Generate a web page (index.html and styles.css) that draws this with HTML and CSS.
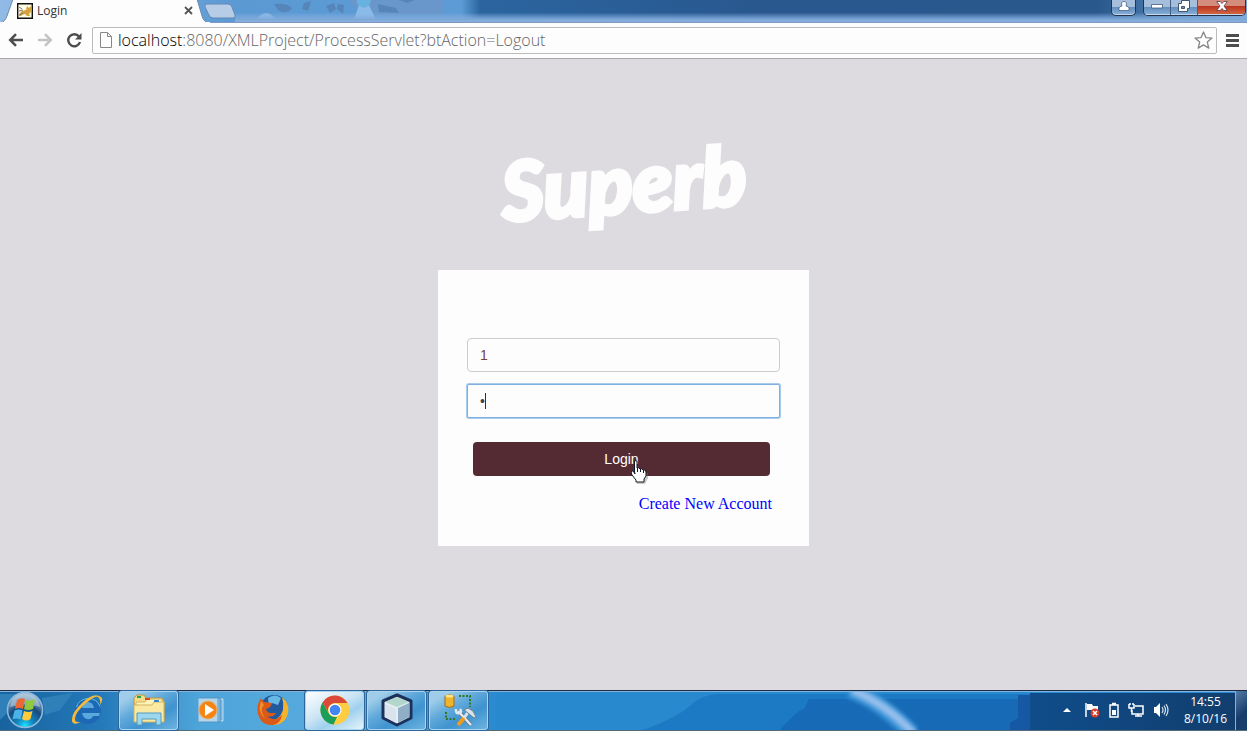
FILE: index.html
```html
<!DOCTYPE html>
<html lang="en">
<head>
<meta charset="utf-8">
<title>Login</title>
<link rel="stylesheet" href="styles.css">
</head>
<body>
<div class="desktop">
  <header class="tabstrip">
    <svg class="backdrop" viewBox="0 0 1247 23" preserveAspectRatio="none" aria-hidden="true">
      <defs>
        <linearGradient id="glass" x1="0" x2="1" y1="0" y2="0"><stop offset="0" stop-color="#91bbe5"/><stop offset=".19" stop-color="#5b99d3"/><stop offset=".37" stop-color="#5c9bd5"/><stop offset=".385" stop-color="#2b659f"/><stop offset=".6" stop-color="#29588f"/><stop offset=".88" stop-color="#29588d"/><stop offset="1" stop-color="#7aa5d5"/></linearGradient>
        <linearGradient id="edge" x1="0" x2="0" y1="0" y2="1"><stop offset=".55" stop-color="#8db4e3" stop-opacity="0"/><stop offset=".85" stop-color="#7da8da"/><stop offset="1" stop-color="#91b1dc"/></linearGradient>
      </defs>
      <path fill="url(#glass)" d="M0 0h1247v23H0z"/>
      <path fill="#6997cb" d="M275 0h75q7 15 25 15h68V0z"/>
      <g fill="#5585b9"><path d="M274 4q16-1 18 5-7 6-14 1zM304 3l7-2-3 10-6-2zM326 6l8-3 2 6-6 4zM338 4l6 1-1 9-6-5zM378 4l18 4 3 5-20-1zM399 0h16l-8 3z"/></g>
      <path fill="#8abbe8" d="M255 22q6-11 15-8l9 8zM353 22l6-17h10l8 17z"/>
      <path fill="#67b2e1" d="M357 0h14l-2 6-6 2-6-4z"/>
      <path fill="url(#edge)" d="M235 0h1012v23H235z"/>
      <path fill="#7c9ac1" d="M0 22h1247v1H0z"/>
    </svg>
    <div class="tab">
      <svg class="tab-shape" viewBox="0 0 210 23" preserveAspectRatio="none" aria-hidden="true"><path fill="#fdfdfd" stroke="#6c8bae" d="M0 23q5-1 7-7L13-1h184l5 17q2 7 8 7"/><path fill="#fdfdfd" d="M0 22h210v1H0z"/></svg>
      <svg class="favicon" width="16" height="16" viewBox="0 0 16 16" aria-hidden="true"><path fill="#fffce5" stroke="#111" stroke-width="1.4" d="M.7.7h14.600v14.600H.7z"/><path fill="#d3a33d" d="M2 11l3-3 4-1 1-4 2 2 2-2v6l-2 2 1 2h-3l-2-2-3 1-1 1H2z"/><path stroke="#777" fill="none" d="M2 4l3 2M2 8l4-1M3 12l3-2"/></svg>
      <span class="tab-title">Login</span>
      <button class="tab-close" aria-label="Close tab"><svg width="9" height="9" viewBox="0 0 9 9"><path stroke="#555" stroke-width="1.8" d="M1 1l7 7M8 1L1 8"/></svg></button>
    </div>
    <button class="new-tab" aria-label="New tab"><svg width="32" height="16" viewBox="0 0 32 16"><path fill="#b6cce7" stroke="#6488b5" d="M3 1h21q3 0 4 3l3 8q1 3-2 3H9q-3 0-4-3L1 4q-1-3 2-3z"/></svg></button>
    <div class="window-controls">
      <button class="control user" aria-label="User"><svg width="12" height="10" viewBox="0 0 12 10"><path fill="#fff" stroke="#31557c" stroke-width=".7" d="M1 9.500V7q0-1.500 3-2Q2.500.5 6 .5T8 5q3 .5 3 2v2.500z"/></svg></button>
      <div class="control-group">
        <button class="control" aria-label="Minimize"><svg width="12" height="6" viewBox="0 0 12 6"><path fill="#fff" stroke="#42597b" stroke-width=".8" d="M.5 1.500h11v3.500H.5z"/></svg></button>
        <button class="control" aria-label="Restore"><svg width="12" height="12" viewBox="0 0 12 12"><path fill="#fff" stroke="#435472" d="M3.500.5h8v8h-2v3h-9v-8h3z"/><path fill="#7992b3" stroke="#435472" d="M3.500 6.500h3v2h-3z"/></svg></button>
        <button class="control close" aria-label="Close"><svg width="12" height="10" viewBox="0 0 12 10"><path fill="#fff" stroke="#593b49" stroke-width=".8" d="M.7.5h3.500L6 2.500 7.800.5h3.500L8 5l3.300 4.500H7.800L6 7.500l-1.800 2H.7L4 5z"/></svg></button>
      </div>
    </div>
  </header>

  <nav class="toolbar" aria-label="Browser toolbar">
    <button class="tool" aria-label="Back"><svg width="16" height="14" viewBox="0 0 16 14"><path fill="none" stroke="#4d4d4d" stroke-width="2.500" d="M15 7H2.500M8 1.200L2.200 7 8 12.800"/></svg></button>
    <button class="tool" aria-label="Forward"><svg width="16" height="14" viewBox="0 0 16 14"><path fill="none" stroke="#c4c4c4" stroke-width="2.500" d="M1 7h12.500M8 1.200L13.800 7 8 12.800"/></svg></button>
    <button class="tool" aria-label="Reload"><svg width="16" height="16" viewBox="0 0 16 16"><path fill="none" stroke="#4d4d4d" stroke-width="2.400" d="M13 4.500A6 6 0 1 0 14 10"/><path fill="#4d4d4d" d="M15.500 1v6.500H9z"/></svg></button>
    <div class="address">
      <svg width="12" height="16" viewBox="0 0 12 16" aria-hidden="true"><path fill="#fff" stroke="#888" d="M.5.5h7l4 4v11H.5zM7.500.5v4h4"/></svg>
      <span class="url"><span class="host">localhost</span>:8080/XMLProject/ProcessServlet?btAction=Logout</span>
      <button class="tool star" aria-label="Bookmark"><svg width="19" height="18" viewBox="0 0 19 18"><path fill="#fff" stroke="#858585" stroke-width="1.300" stroke-linejoin="round" d="M9.500 1l2.400 5.600 6.100.5-4.700 4 1.500 6-5.300-3.200-5.300 3.200 1.500-6-4.700-4 6.100-.5z"/></svg></button>
    </div>
    <button class="tool" aria-label="Menu"><svg width="13" height="13" viewBox="0 0 13 13"><path stroke="#4d4d4d" stroke-width="3" d="M0 1.500h13M0 6.500h13M0 11.500h13"/></svg></button>
  </nav>

  <main class="page">
    <h1 class="logo">Superb</h1>
    <form class="card">
      <input class="field" type="text" value="1" aria-label="Username">
      <div class="password">
        <input class="field focused" type="password" value="1" aria-label="Password">
        <span class="caret"></span>
      </div>
      <div class="submit-row">
        <button class="submit" type="button">Login</button>
        <svg class="pointer" width="20" height="24" viewBox="0 0 20 24" aria-hidden="true"><path fill="#777" opacity=".4" d="M7 4l3 6 8 3v5l-3 6H7z"/><path fill="#fff" stroke="#101826" stroke-linejoin="round" d="M4.500 12V2q0-1.500 1.300-1.500T7 2v6q2-1 3 1 2-1 3 1 3-1 3 2v4l-2 3v3H6v-2l-4-5-1-3q1-2 3 0l1 2z"/><path stroke="#101826" d="M7.500 8v4M10.500 9v3M13.500 10v3"/></svg>
      </div>
      <a class="create" href="#">Create New Account</a>
    </form>
  </main>

  <footer class="taskbar">
    <svg class="backdrop" viewBox="0 0 1247 41" preserveAspectRatio="none" aria-hidden="true">
      <defs>
        <linearGradient id="bar" x1="0" x2="1" y1="0" y2="0"><stop offset="0" stop-color="#17639e"/><stop offset=".08" stop-color="#2479b9"/><stop offset=".16" stop-color="#4ea5d9"/><stop offset=".29" stop-color="#59abdf"/><stop offset=".4" stop-color="#2989cf"/></linearGradient>
        <linearGradient id="tray" x1="0" x2="1" y1="0" y2="0"><stop offset="0" stop-color="#0f4d8b"/><stop offset="1" stop-color="#123d6b"/></linearGradient>
        <filter id="soft"><feGaussianBlur stdDeviation="2"/></filter>
      </defs>
      <path fill="url(#bar)" d="M0 0h1247v41H0z"/>
      <path fill="#2f80b9" d="M0 4h20L8 22 0 30zM42 8l31-5-13 17-15 5z"/>
      <path fill="#1c79c4" d="M640 41q33-11 50-25 11-12 32-12h525v37z"/>
      <path fill="#176ab6" d="M781 41v-3l18-17 5-2 5-10h438v32z"/>
      <path fill="none" stroke="#3b95d8" stroke-width="16" filter="url(#soft)" d="M850 0q32 12 62 44"/>
      <path fill="none" stroke="#97c0ed" stroke-width="8" filter="url(#soft)" d="M852 0q34 14 62 44"/>
      <path fill="#1658a4" d="M1018 5h229v36h-237v-8l8-5z"/>
      <path fill="url(#tray)" d="M1030 3h217v38h-217z"/>
      <path fill="#1a2b45" d="M0 0h1247v1H0z"/><path fill="#83b4df" d="M0 1h1247v1H0z"/><path fill="#536a7b" d="M0 40h1247v1H0z"/>
    </svg>
    <button class="start" aria-label="Start"><svg width="38" height="38" viewBox="0 0 38 38"><defs><radialGradient id="orb" cx=".5" cy=".95" r=".9"><stop offset="0" stop-color="#1de5ff"/><stop offset=".25" stop-color="#108bc4"/><stop offset=".6" stop-color="#164b80"/><stop offset="1" stop-color="#a5c0d5"/></radialGradient></defs><circle cx="19" cy="19" r="17.500" fill="url(#orb)" stroke="#8fb9da" stroke-width="1.500"/><path fill="#b7cfe0" opacity=".6" d="M4 16Q6 3 19 3t15 13q-14-5-30 0z"/><path fill="#ed6832" d="M11 9q4-3 8-1l-2 10q-4-2-8 0z"/><path fill="#91c83e" d="M20 9q4 2 9-1l-2 10q-5 2-9 0z"/><path fill="#4cb3e9" d="M8.500 19.500q4-2 8 0l-2 9q-4-2-8 0z"/><path fill="#ffcb3c" d="M18 20q4 2 8.500 0l-2 8q-4 3-8.500 0z"/></svg></button>
    <div class="apps">
      <button class="app" aria-label="Internet Explorer"><svg width="34" height="34" viewBox="0 0 34 34"><circle cx="18" cy="18" r="13" fill="#1d68b4"/><path fill="none" stroke="#62bfee" d="M6.500 14Q9 6 18 5.500q9 0 12 8"/><path fill="#5aa9dd" d="M12 15q1-6 6-6t6 6zM12 20h18l-1 3h-6q-2 4-6 3-4-1-5-6z"/><path fill="#f2b93b" d="M31 4Q24-1 13 9 1 20 2 28q1 5 9 1-7 1-6-4 1-6 9-13Q25 2 28 4t2 8q4-6 1-8z"/></svg></button>
      <button class="app open" aria-label="Explorer"><svg width="34" height="32" viewBox="0 0 34 32"><path fill="#f5dc88" stroke="#b99545" d="M2 27V4l3-3h7l2 3h16l2 3v20z"/><path fill="#fff3b9" stroke="#d4b45e" d="M4 27V8h9l2-3h15v22z"/><path fill="#fae9a2" stroke="#d4b45e" d="M2 28V11h18l2-3h10v20z"/><path fill="#20a34a" d="M5 2h4v2H5z"/><path fill="#d5472c" d="M13 4h5v2h-5z"/><path fill="#3688c6" d="M22 6h5v2h-5z"/><path fill="#9cd7f0" stroke="#559abf" d="M5 31V19h24v12h-5v-6H10v6z"/></svg></button>
      <button class="app" aria-label="Media Player"><svg width="28" height="28" viewBox="0 0 28 28"><path fill="#78b5e0" stroke="#b9def5" d="M7 3h19v22H7z"/><path fill="#a0cdeb" stroke="#468bc0" d="M4 2h19v24H4z"/><path fill="#b4d6ec" stroke="#5b9bca" d="M1 2h20v24H1z"/><circle cx="11" cy="14" r="9" fill="#f58414" stroke="#e6b068"/><path fill="#fff" d="M8 8l9 6-9 6z"/></svg></button>
      <button class="app" aria-label="Firefox"><svg width="34" height="34" viewBox="0 0 34 34"><circle cx="18" cy="16" r="14" fill="#235a9d"/><path fill="#66b9e4" d="M12 5q7-5 13 0l-3 7-6-2-3 4z"/><path fill="#f7b22d" d="M26 4q8 7 6 16-3 12-15 12L8 28q15 2 19-11 1-7-1-13z"/><path fill="#dc5a18" d="M5 5l3 4 8 1q-1 5-6 6 1 4 5 4h5q-3 5-9 3 7 7 15-1-1 8-9 10Q7 33 3 24-1 14 5 5z"/><path fill="#f0902b" d="M5 8l3 4q-5 5 1 13-8-5-4-17z"/></svg></button>
      <button class="app open active" aria-label="Chrome"><svg width="30" height="30" viewBox="0 0 30 30"><circle cx="15" cy="15" r="14.500" fill="#ffcd42"/><path fill="#da4939" d="M2.500 7.500A14.500 14.500 0 0 1 27.500 8H15a7 7 0 0 0-6.200 10.200z"/><path fill="#1b9e5a" d="M2.500 7.500l6.300 11Q11 22 15 22h2l-3.500 7.500A14.500 14.500 0 0 1 2.500 7.500z"/><circle cx="15" cy="15" r="6.500" fill="#fff"/><circle cx="15" cy="15" r="5.300" fill="#4285f4"/></svg></button>
      <button class="app open" aria-label="NetBeans"><svg width="32" height="34" viewBox="0 0 32 34"><path fill="#e5eef2" stroke="#1b315a" stroke-width="3" stroke-linejoin="round" d="M16 2l14 6v17l-14 7L2 25V8z"/><path fill="#b2d6cb" d="M16 4l12 5-12 5L4 9z"/><path fill="#91aec7" d="M17 15l11-5v14l-11 6z"/><path fill="#d8e3ee" d="M4 11l11 5v14L4 24z"/></svg></button>
      <button class="app open" aria-label="Database tools"><svg width="34" height="34" viewBox="0 0 34 34"><path fill="#edb42c" stroke="#a46b16" d="M3 3q5-3 9 0v10q-5 3-9 0z"/><ellipse cx="7.500" cy="3" rx="4" ry="1.500" fill="#ffe58b"/><path fill="none" stroke="#34751d" stroke-width="2" stroke-dasharray="2 1.500" d="M17 3h11v11M4 19v7h10"/><path stroke="#657080" stroke-width="4" d="M16 18l13 14"/><path stroke="#e1e9ee" stroke-width="2.500" d="M16 18l13 14"/><path fill="none" stroke="#e1e9ee" stroke-width="2.500" d="M14 16q-1 5 4 4 2-1 0-4"/><path stroke="#ef9b1d" stroke-width="4" d="M16 32l6-7"/><path stroke="#dce3e7" stroke-width="3" d="M22 25l5-7"/><path fill="#d9e3ec" stroke="#6e8092" d="M22 17l4-2 5 3 3 6-2 1-6-5z"/></svg></button>
    </div>
    <div class="tray">
      <svg width="8" height="4" viewBox="0 0 8 4" aria-hidden="true"><path fill="#fff" d="M4 0l4 4H0z"/></svg>
      <svg width="16" height="16" viewBox="0 0 16 16" aria-hidden="true"><path stroke="#fff" stroke-width="1.500" d="M2 1v14"/><path fill="#fff" d="M3 2h5l1 2h5v6H9L8 8H3z"/><circle cx="11" cy="11" r="4.500" fill="#d63d27"/><path stroke="#fff" stroke-width="1.500" d="M9 9l4 4M13 9l-4 4"/></svg>
      <svg width="10" height="16" viewBox="0 0 10 16" aria-hidden="true"><path fill="none" stroke="#fff" stroke-width="1.500" d="M1 3h8v12H1zM3 1.500h4"/><path fill="#fff" d="M3 8h4v5H3z"/></svg>
      <svg width="16" height="16" viewBox="0 0 16 16" aria-hidden="true"><path fill="none" stroke="#fff" stroke-width="1.500" d="M7 4h8v8H4V8M7 14h7M10 12v2M1 2v4h5V2M3.500 6v4M2 1v2M5 1v2"/></svg>
      <svg width="16" height="16" viewBox="0 0 16 16" aria-hidden="true"><path fill="#fff" d="M1 5h2l4-4v14l-4-4H1z"/><path fill="none" stroke="#d8e4ee" stroke-width="1.200" d="M9 5q2 3 0 6M11 3.500q3 4.500 0 9M13 2q4 6 0 12"/></svg>
      <time class="clock" datetime="2016-10-08T14:55"><span>14:55</span><span>8/10/16</span></time>
    </div>
    <button class="show-desktop" aria-label="Show desktop"></button>
  </footer>
</div>
</body>
</html>
```
FILE: styles.css
```css
* { box-sizing: border-box; }
body { margin: 0; }
button { padding: 0; border: 0; background: none; font: inherit; }
svg { display: block; flex: none; }

.desktop {
  display: flex;
  flex-direction: column;
  min-height: 100vh;
  background: #dddbe0;
  font-family: "Open Sans", "Noto Sans", sans-serif;
}
.backdrop {
  position: absolute;
  inset: 0;
  width: 100%;
  height: 100%;
  z-index: -1;
}

.tabstrip {
  position: relative;
  z-index: 0;
  display: flex;
  align-items: flex-start;
  height: 23px;
}
.tab {
  position: relative;
  z-index: 0;
  display: flex;
  align-items: center;
  gap: 4px;
  width: 210px;
  height: 23px;
  padding: 0 17px 2px;
}
.tab-shape {
  position: absolute;
  inset: 0;
  width: 100%;
  height: 100%;
  z-index: -1;
}
.tab-title { flex: 1; color: #333; font-size: 12px; line-height: 20px; }
.new-tab { margin: 3px 0 0 -6px; }
.window-controls { display: flex; gap: 7px; margin-left: auto; padding-right: 1px; }
.control-group {
  display: flex;
  border: 1px solid #26354d;
  border-top: 0;
  border-radius: 0 0 5px 5px;
  overflow: hidden;
}
.control {
  display: flex;
  align-items: center;
  justify-content: center;
  width: 27px;
  height: 15px;
  padding-bottom: 3px;
  background: linear-gradient(#a5bedb 0 45%, #628dbb 45%, #87afd8);
  border-right: 1px solid #455f82;
  box-shadow: inset 0 -1px #c1d9f0;
}
.control.user {
  width: 25px;
  height: 16px;
  border: 1px solid #26354d;
  border-top: 0;
  border-radius: 0 0 5px 5px;
}
.control.close {
  width: 47px;
  border: 0;
  background: linear-gradient(#d48c7c 0 40%, #b9311f 40%, #d66c44);
}

.toolbar {
  display: flex;
  align-items: center;
  gap: 13px;
  height: 36px;
  padding: 0 8px 1px;
  background: #fdfdfd;
  border-bottom: 1px solid #a9a9ab;
}
.address {
  display: flex;
  flex: 1;
  align-items: center;
  gap: 6px;
  height: 27px;
  margin: 0 -4px 0 -3px;
  padding: 0 3px 0 7px;
  border: 1px solid #bcbcbc;
  border-radius: 2px;
}
.url { flex: 1; color: #666; font-size: 16px; font-weight: 300; line-height: 24px; }
.host { color: #000; }

.page {
  display: flex;
  flex: 1;
  flex-direction: column;
  align-items: center;
  padding: 64px 16px;
}
.logo {
  margin: 0;
  color: #fdfdfd;
  font: italic 900 82px/116px Lato, sans-serif;
  -webkit-text-stroke: 4px #fdfdfd;
  rotate: -4deg;
}
.card {
  display: flex;
  flex-direction: column;
  width: 371px;
  max-width: 100%;
  margin-top: 31px;
  padding: 68px 29px 32px;
  background: #fdfdfd;
}
.field {
  display: block;
  width: 100%;
  height: 34px;
  padding: 6px 12px;
  border: 1px solid #ccc;
  border-radius: 4px;
  background: #fdfdfd;
  color: #7d3e3e;
  font: 14px "Liberation Sans", Arial, sans-serif;
  outline: 0;
}
.password { position: relative; margin-top: 12px; }
.field.focused {
  border-color: #7fb0e4;
  border-radius: 2px;
  box-shadow: 0 0 0 1px #a5cbef;
  color: #444;
}
.caret {
  position: absolute;
  top: 9px;
  left: 18px;
  width: 1px;
  height: 16px;
  background: #333;
}
.submit-row { position: relative; margin: 24px 10px 0 6px; }
.submit {
  display: block;
  width: 100%;
  height: 34px;
  border-radius: 4px;
  background: #542a33;
  color: #fff;
  font: 14px "Liberation Sans", Arial, sans-serif;
}
.pointer { position: absolute; top: 18px; left: 157px; }
.create {
  align-self: flex-end;
  margin: 18px 8px 0 0;
  color: #00f;
  font: 16px/20px "Liberation Serif", "Times New Roman", serif;
  text-decoration: none;
}

.taskbar {
  position: relative;
  z-index: 0;
  display: flex;
  align-items: center;
  height: 41px;
  padding-bottom: 1px;
}
.start { margin: 0 13px 0 6px; }
.apps { display: flex; gap: 3px; }
.app {
  display: flex;
  align-items: center;
  justify-content: center;
  width: 59px;
  height: 39px;
}
.app.open {
  border: 1px solid #a9d5f0;
  border-radius: 3px;
  background: linear-gradient(150deg, #9fcde9 0 15%, #62aadb 40%, #3f93cf 65%, #6db3e0);
  box-shadow: 0 0 0 1px #2c669b;
}
.app.open.active { background: linear-gradient(150deg, #fff, #cae4f4 45%, #9fd0ef 65%, #e5f4fa); }
.tray {
  display: flex;
  align-items: center;
  gap: 9px;
  margin-left: auto;
  padding-right: 8px;
}
.tray > :first-child { margin-right: 4px; }
.clock {
  display: flex;
  flex-direction: column;
  align-items: center;
  margin-left: 6px;
  color: #fff;
  font-size: 12px;
  line-height: 17px;
}
.show-desktop {
  width: 12px;
  height: 39px;
  border-left: 1px solid #8cb0d2;
  background: linear-gradient(135deg, #557ca6, #173e6b 60%);
}
```
